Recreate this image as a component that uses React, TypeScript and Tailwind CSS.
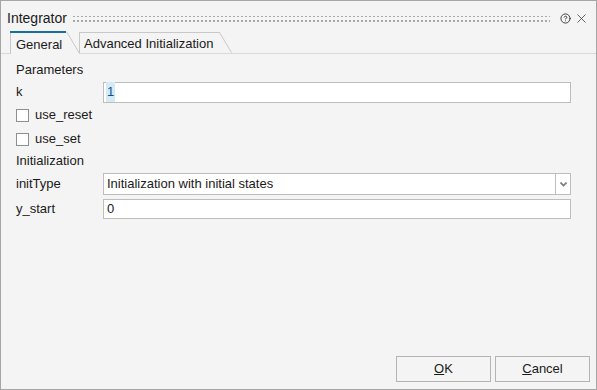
import { CircleHelp, X } from 'lucide-react'

function Grip() {
  return (
    <svg className="flex-1 h-[8px] mx-[6px]" preserveAspectRatio="none">
      <defs>
        <pattern id="grip" width="4" height="5" patternUnits="userSpaceOnUse">
          <rect x="0" y="0" width="2" height="2" fill="#a8a8a8" />
        </pattern>
      </defs>
      <rect x="0" y="1" width="100%" height="7" fill="url(#grip)" />
    </svg>
  )
}

function Checkbox({ label }: { label: string }) {
  return (
    <div className="flex items-center h-[24px] gap-[6px]">
      <span className="w-[13px] h-[13px] border border-[#8f8f8f] bg-white" />
      <span>{label}</span>
    </div>
  )
}

function Field({ label, h, children }: { label: string; h: string; children: React.ReactNode }) {
  return (
    <div className={`flex items-center ${h}`}>
      <span className="w-[87px]">{label}</span>
      {children}
    </div>
  )
}

export default function App() {
  return (
    <div
      className="w-[597px] h-[390px] bg-[#f4f4f4] border border-[#a6a6a6] flex flex-col text-[13px] text-[#1a1a1a]"
      style={{ fontFamily: '"Segoe UI", "Liberation Sans", Arial, sans-serif' }}
    >
      {/* title bar */}
      <div className="flex items-center h-[30px] pl-[6px] pr-[7px] pt-[5px]">
        <span className="text-[14px]">Integrator</span>
        <Grip />
        <CircleHelp size={11} strokeWidth={2} className="text-[#333] ml-[4px]" />
        <X size={15} strokeWidth={1.2} className="text-[#333] ml-[3px]" />
      </div>

      {/* tabs */}
      <div className="flex items-end h-[23px] pl-[9px] pr-[2px] border-b border-[#d9d9d9]">
        <div className="relative h-[23px] w-[69px] -mb-px bg-[#f4f4f4] border-l border-[#c8c8c8]">
          <div className="absolute left-[-1px] top-0 w-[56px] h-[2px] bg-[#1a6fa0]" />
          <svg className="absolute right-[-1px] top-0" width="14" height="23">
            <path d="M0.5 0.5 L13.5 22.5" stroke="#c8c8c8" fill="none" />
          </svg>
          <span className="absolute left-[5px] top-[4px]">General</span>
        </div>
        <div className="relative h-[21px] w-[153px] bg-[#f4f4f4]">
          <div className="absolute left-0 top-0 bottom-0 border-l border-[#c8c8c8]" />
          <div className="absolute left-0 top-0 w-[141px] border-t border-[#c8c8c8]" />
          <svg className="absolute right-0 top-0" width="13" height="21">
            <path d="M0.5 0.5 L12.5 20.5" stroke="#c8c8c8" fill="none" />
          </svg>
          <span className="absolute left-[5px] top-[2px]">Advanced Initialization</span>
        </div>
      </div>

      {/* content */}
      <div className="flex-1 flex flex-col pl-[15px] pr-[25px] pt-[5px]">
        <div className="h-[22px] flex items-center">Parameters</div>
        <Field label="k" h="h-[22px]">
          <div className="flex-1 h-[21px] border border-[#bdbdbd] bg-white flex items-center pl-[2px]">
            <span className="bg-[#d4ebf6] px-[1px] text-[#0f4f8a]">1</span>
          </div>
        </Field>
        <Checkbox label="use_reset" />
        <Checkbox label="use_set" />
        <div className="h-[20px] flex items-center">Initialization</div>
        <Field label="initType" h="h-[26px]">
          <div className="flex-1 h-[22px] border border-[#bdbdbd] bg-white flex items-center">
            <span className="flex-1 pl-[3px]">Initialization with initial states</span>
            <div className="w-[15px] h-full border-l border-[#bdbdbd] flex items-center justify-center">
              <svg width="7" height="5" viewBox="0 0 7 5">
                <path d="M0.5 0.5 L3.5 3.5 L6.5 0.5" stroke="#7a7a7a" strokeWidth="1.6" fill="none" />
              </svg>
            </div>
          </div>
        </Field>
        <Field label="y_start" h="h-[24px]">
          <div className="flex-1 h-[20px] border border-[#bdbdbd] bg-white flex items-center pl-[3px]">
            0
          </div>
        </Field>
        <div className="flex-1" />
        <div className="flex justify-end gap-[4px] pb-[7px] mr-[-19px]">
          <button className="w-[95px] h-[26px] border border-[#b4b4b4] bg-[#f4f4f4]">
            <span className="underline">O</span>K
          </button>
          <button className="w-[95px] h-[26px] border border-[#b4b4b4] bg-[#f4f4f4]">
            <span className="underline">C</span>ancel
          </button>
        </div>
      </div>
    </div>
  )
}
